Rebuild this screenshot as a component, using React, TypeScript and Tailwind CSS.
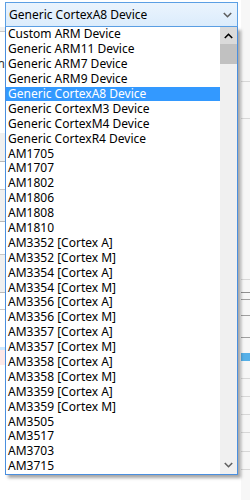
const devices = [
  'Custom ARM Device',
  'Generic ARM11 Device',
  'Generic ARM7 Device',
  'Generic ARM9 Device',
  'Generic CortexA8 Device',
  'Generic CortexM3 Device',
  'Generic CortexM4 Device',
  'Generic CortexR4 Device',
  'AM1705',
  'AM1707',
  'AM1802',
  'AM1806',
  'AM1808',
  'AM1810',
  'AM3352 [Cortex A]',
  'AM3352 [Cortex M]',
  'AM3354 [Cortex A]',
  'AM3354 [Cortex M]',
  'AM3356 [Cortex A]',
  'AM3356 [Cortex M]',
  'AM3357 [Cortex A]',
  'AM3357 [Cortex M]',
  'AM3358 [Cortex A]',
  'AM3358 [Cortex M]',
  'AM3359 [Cortex A]',
  'AM3359 [Cortex M]',
  'AM3505',
  'AM3517',
  'AM3703',
  'AM3715',
];

const selected = 'Generic CortexA8 Device';

function Chevron({ up, className }: { up?: boolean; className?: string }) {
  return (
    <svg width="9" height="6" viewBox="0 0 9 6" className={className}>
      <polyline
        points={up ? '0.8,5 4.5,1.3 8.2,5' : '0.8,1 4.5,4.7 8.2,1'}
        fill="none"
        stroke="currentColor"
        strokeWidth="1.6"
      />
    </svg>
  );
}

// rows of the window behind the popup, only slivers of it show
const leftRows = [
  { h: 'h-[27px]', cls: 'bg-white' },
  { h: 'h-[5px]', cls: 'bg-[#f0f0f0] border-b border-[#c8c8c8]' },
  { h: 'h-[101px]', cls: 'bg-white' },
  { h: 'h-[29px]', cls: 'bg-[#f0f0f0] border-b border-[#b8b8b8]' },
  { h: 'h-[28px]', cls: 'bg-white border-b border-[#c8c8c8]' },
  { h: 'h-[32px]', cls: 'bg-[#f0f0f0] border-b border-[#b8b8b8]' },
  { h: 'h-[33px]', cls: 'bg-white border-b border-[#c8c8c8]' },
  { h: 'h-[38px]', cls: 'bg-[#f0f0f0] border-b border-[#b8b8b8]' },
  { h: 'h-[17px]', cls: 'bg-white border-b border-[#c8c8c8]' },
  { h: 'h-[37px]', cls: 'bg-white' },
  { h: 'h-[3px]', cls: 'bg-[#cce8ff]' },
  { h: 'h-[15px]', cls: 'bg-[#fde9e9]' },
];

const rightRows = [
  { h: 'h-[82px]', cls: 'border-b border-[#d8d8d8]' },
  { h: 'h-[37px]', cls: 'border-b border-[#d8d8d8]' },
  { h: 'h-[161px]', cls: 'border-b border-[#d8d8d8]' },
  { h: 'h-[13px]', cls: 'border-b border-[#909090]' },
  { h: 'h-[7px]', cls: 'border-b border-[#a0a0a0]' },
  { h: 'h-[16px]', cls: 'border-b border-[#a0a0a0]' },
  { h: 'h-[22px]', cls: 'border-b border-[#a0a0a0]' },
  { h: 'h-[15px]', cls: '' },
  { h: 'h-[8px]', cls: 'bg-[#56b0e8]' },
  { h: 'h-[18px]', cls: 'border-b border-[#d8d8d8]' },
  { h: 'h-[18px]', cls: 'border-b border-[#d8d8d8]' },
  { h: 'h-[18px]', cls: 'border-b border-[#d8d8d8]' },
  { h: 'h-[18px]', cls: 'border-b border-[#d8d8d8]' },
  { h: 'h-[19px]', cls: 'border-b border-[#d8d8d8]' },
  { h: 'h-[18px]', cls: 'border-b border-[#d8d8d8]' },
];

export default function App() {
  return (
    <div
      className="relative w-[250px] h-[500px] overflow-hidden bg-white text-black"
      style={{ fontFamily: '"Noto Sans", "Open Sans", sans-serif' }}
    >
      {/* window behind */}
      <div className="flex h-full">
        <div className="w-[5px] flex flex-col">
          {leftRows.map((r, i) => (
            <div key={i} className={`${r.h} ${r.cls} shrink-0 relative`}>
              {i === 2 && (
                <span className="absolute right-0 top-[26px] text-[12px] leading-none text-[#333]">n</span>
              )}
            </div>
          ))}
        </div>
        <div className="flex-1" />
        <div className="w-[9px] flex flex-col bg-[#f7f7f7]">
          {rightRows.map((r, i) => (
            <div key={i} className={`${r.h} ${r.cls} shrink-0`} />
          ))}
        </div>
      </div>

      {/* combo box + open list */}
      <div className="absolute left-[5px] top-[2px] w-[233px] flex flex-col">
        <div className="h-[25px] flex items-center justify-between pl-[3px] pr-[5px] border border-[#5b9fe4] bg-gradient-to-b from-[#ebf4fd] to-[#dbecfc]">
          <span className="text-[12px] leading-none">{selected}</span>
          <Chevron className="text-[#5f5f5f]" />
        </div>
        <div className="flex border border-t-0 border-[#4a8fdf] bg-white shadow-[3px_3px_3px_rgba(0,0,0,0.35)]">
          <div className="flex-1 flex flex-col">
            {devices.map((d) => (
              <div
                key={d}
                className={`h-[14.9px] flex items-center pl-[2px] text-[12px] leading-none whitespace-nowrap ${
                  d === selected ? 'bg-[#3399ff] text-white' : ''
                }`}
              >
                {d}
              </div>
            ))}
          </div>
          <div className="w-[17px] flex flex-col bg-[#f0f0f0]">
            <div className="h-[17px] flex items-center justify-center bg-[#dadada]">
              <Chevron up className="text-black" />
            </div>
            <div className="h-[20px] bg-[#c1c1c1]" />
            <div className="flex-1" />
            <div className="h-[17px] flex items-center justify-center">
              <Chevron className="text-[#606060]" />
            </div>
          </div>
        </div>
      </div>
    </div>
  );
}
